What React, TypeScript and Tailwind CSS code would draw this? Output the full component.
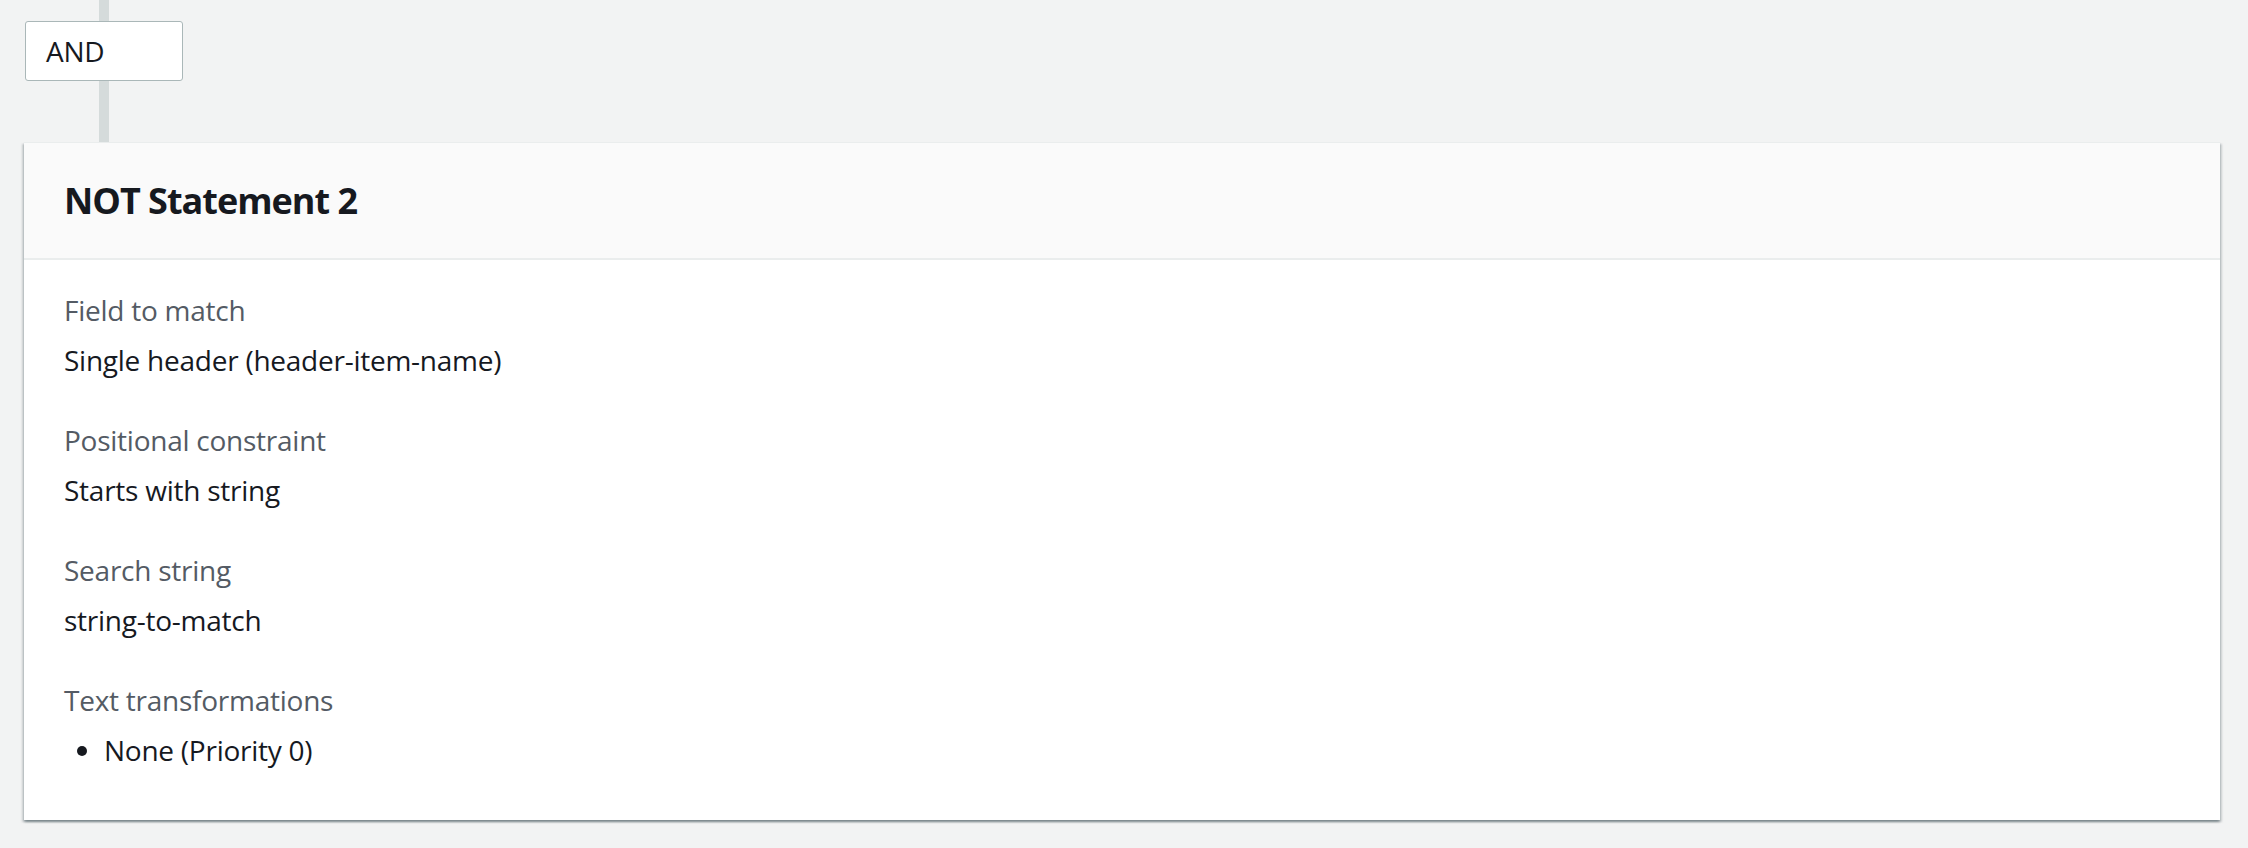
import React from "react";

const fields: { label: string; value: string }[] = [
  { label: "Field to match", value: "Single header (header-item-name)" },
  { label: "Positional constraint", value: "Starts with string" },
  { label: "Search string", value: "string-to-match" },
];

export default function App() {
  return (
    <div className="w-[2248px] h-[848px] overflow-hidden bg-[#f2f3f3] font-['Open_Sans',sans-serif] text-[#16191f] tracking-[-0.25px]">
      <div className="pl-[25px] flex flex-col">
        <div className="flex flex-col items-center w-[158px]">
          <div className="w-[10px] h-[21px] bg-[#d5dbdb]" />
          <div className="w-[158px] h-[60px] bg-white border border-[#aab7b8] rounded-[3px] flex items-center pl-[20px] text-[28px] leading-none">
            AND
          </div>
          <div className="w-[10px] h-[61px] bg-[#d5dbdb]" />
        </div>
      </div>
      <div className="ml-[24px] w-[2196px] bg-white border-t border-[#eaeded] shadow-[0_2px_2px_0_rgba(0,28,36,0.3),2px_2px_2px_0_rgba(0,28,36,0.15),-2px_2px_2px_0_rgba(0,28,36,0.15)]">
        <div className="h-[117px] bg-[#fafafa] border-b-2 border-[#eaeded] px-[40px] flex items-center">
          <h2 className="text-[36px] font-bold leading-[44px] tracking-[-1px] text-[#16191f]">NOT Statement 2</h2>
        </div>
        <div className="pt-[28px] pb-[48px] px-[40px] flex flex-col gap-[36px]">
          {fields.map((f) => (
            <div key={f.label} className="flex flex-col gap-[6px]">
              <div className="text-[28px] leading-[44px] text-[#545b64]">{f.label}</div>
              <div className="text-[28px] leading-[44px] text-[#16191f]">{f.value}</div>
            </div>
          ))}
          <div className="flex flex-col gap-[6px]">
            <div className="text-[28px] leading-[44px] text-[#545b64]">Text transformations</div>
            <ul className="list-disc pl-[40px] text-[28px] leading-[44px] text-[#16191f]">
              <li>None (Priority 0)</li>
            </ul>
          </div>
        </div>
      </div>
    </div>
  );
}
